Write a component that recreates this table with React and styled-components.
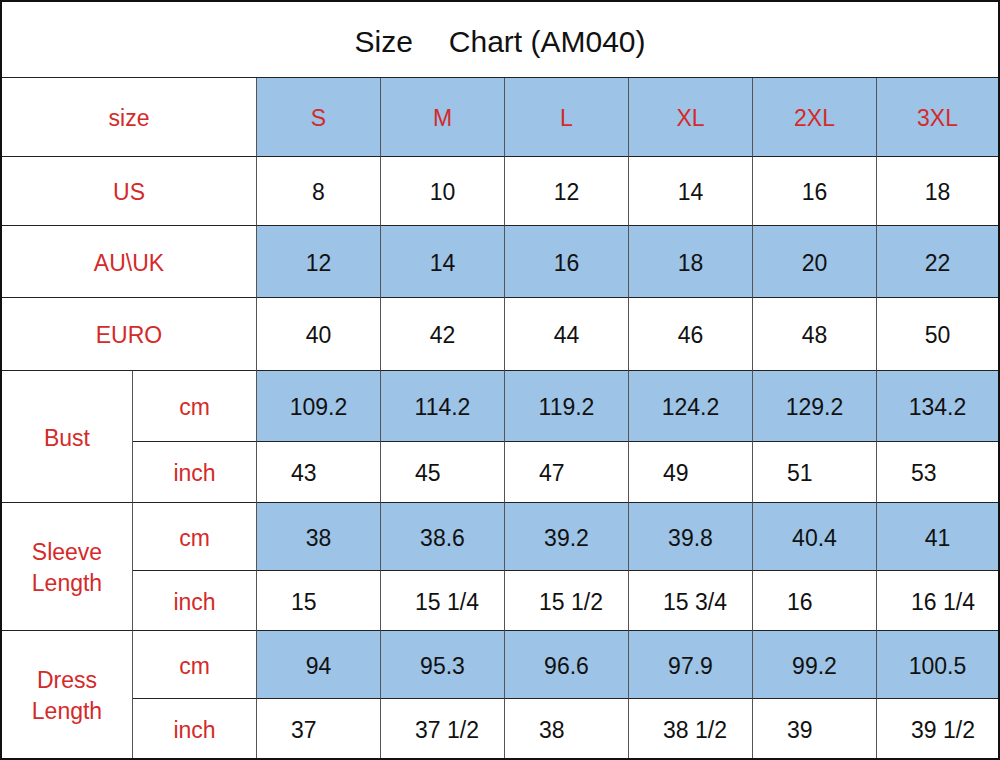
import styled, { createGlobalStyle } from "styled-components";

const GlobalStyle = createGlobalStyle`
  html, body {
    margin: 0;
    padding: 0;
    background: #ffffff;
  }
  body {
    font-family: "Liberation Sans", Arial, sans-serif;
  }
`;

export const ChartGrid = styled.div`
  display: grid;
  width: 1000px;
  height: 760px;
  box-sizing: border-box;
  grid-template-columns: 131px repeat(6, 124px) 1fr;
  grid-template-rows: 76px 79px 69px 72px 73px 71px 61px 68px 60px 68px 1fr;
  border: 2px solid #111;
  background: #fff;
`;

export const TitleCell = styled.div`
  grid-column: 1 / -1;
  display: flex;
  justify-content: center;
  align-items: center;
  gap: 36px;
  font-size: 30px;
  color: #111;
  border-bottom: 1px solid #222;
  padding-top: 4px;
`;

export const Cell = styled.div`
  display: flex;
  flex-direction: ${({ $stack }) => ($stack ? "column" : "row")};
  align-items: center;
  justify-content: ${({ $left }) => ($left ? "flex-start" : "center")};
  padding: 3px 0 0 ${({ $left }) => ($left ? "34px" : "0")};
  box-sizing: border-box;
  grid-column: span ${({ $colSpan }) => $colSpan || 1};
  grid-row: span ${({ $rowSpan }) => $rowSpan || 1};
  background: ${({ $blue }) => ($blue ? "#9dc3e6" : "#fff")};
  color: ${({ $red }) => ($red ? "#d42a2a" : "#111")};
  font-size: 23px;
  line-height: 31px;
  text-align: center;
  border-right: ${({ $last }) => ($last ? "none" : "1px solid #555")};
  border-bottom: ${({ $end }) => ($end ? "none" : "1px solid #222")};
`;

export const LabelLine = styled.span`
  display: block;
`;

const sizes = ["S", "M", "L", "XL", "2XL", "3XL"];

const simpleRows = [
  { label: "US", values: [8, 10, 12, 14, 16, 18], blue: false },
  { label: "AU\\UK", values: [12, 14, 16, 18, 20, 22], blue: true },
  { label: "EURO", values: [40, 42, 44, 46, 48, 50], blue: false },
];

const measureRows = [
  {
    label: ["Bust"],
    cm: ["109.2", "114.2", "119.2", "124.2", "129.2", "134.2"],
    inch: ["43", "45", "47", "49", "51", "53"],
  },
  {
    label: ["Sleeve", "Length"],
    cm: ["38", "38.6", "39.2", "39.8", "40.4", "41"],
    inch: ["15", "15 1/4", "15 1/2", "15 3/4", "16", "16 1/4"],
  },
  {
    label: ["Dress", "Length"],
    cm: ["94", "95.3", "96.6", "97.9", "99.2", "100.5"],
    inch: ["37", "37 1/2", "38", "38 1/2", "39", "39 1/2"],
  },
];

const App = () => {
  return (
    <>
      <GlobalStyle />
      <ChartGrid>
        <TitleCell>
          <span>Size</span>
          <span>Chart (AM040)</span>
        </TitleCell>

        <Cell $red $colSpan={2}>size</Cell>
        {sizes.map((s, i) => (
          <Cell key={s} $red $blue $last={i === 5}>
            {s}
          </Cell>
        ))}

        {simpleRows.map((row) => [
          <Cell key={row.label} $red $colSpan={2}>
            {row.label}
          </Cell>,
          ...row.values.map((v, i) => (
            <Cell key={row.label + i} $blue={row.blue} $last={i === 5}>
              {v}
            </Cell>
          )),
        ])}

        {measureRows.map((row, r) => {
          const end = r === measureRows.length - 1;
          const name = row.label.join(" ");
          return [
            <Cell key={name} $red $stack $rowSpan={2} $end={end}>
              {row.label.map((l) => (
                <LabelLine key={l}>{l}</LabelLine>
              ))}
            </Cell>,
            <Cell key={name + "cm"} $red>
              cm
            </Cell>,
            ...row.cm.map((v, i) => (
              <Cell key={name + "c" + i} $blue $last={i === 5}>
                {v}
              </Cell>
            )),
            <Cell key={name + "inch"} $red $end={end}>
              inch
            </Cell>,
            ...row.inch.map((v, i) => (
              <Cell key={name + "i" + i} $left $last={i === 5} $end={end}>
                {v}
              </Cell>
            )),
          ];
        })}
      </ChartGrid>
    </>
  );
};

export default App;
